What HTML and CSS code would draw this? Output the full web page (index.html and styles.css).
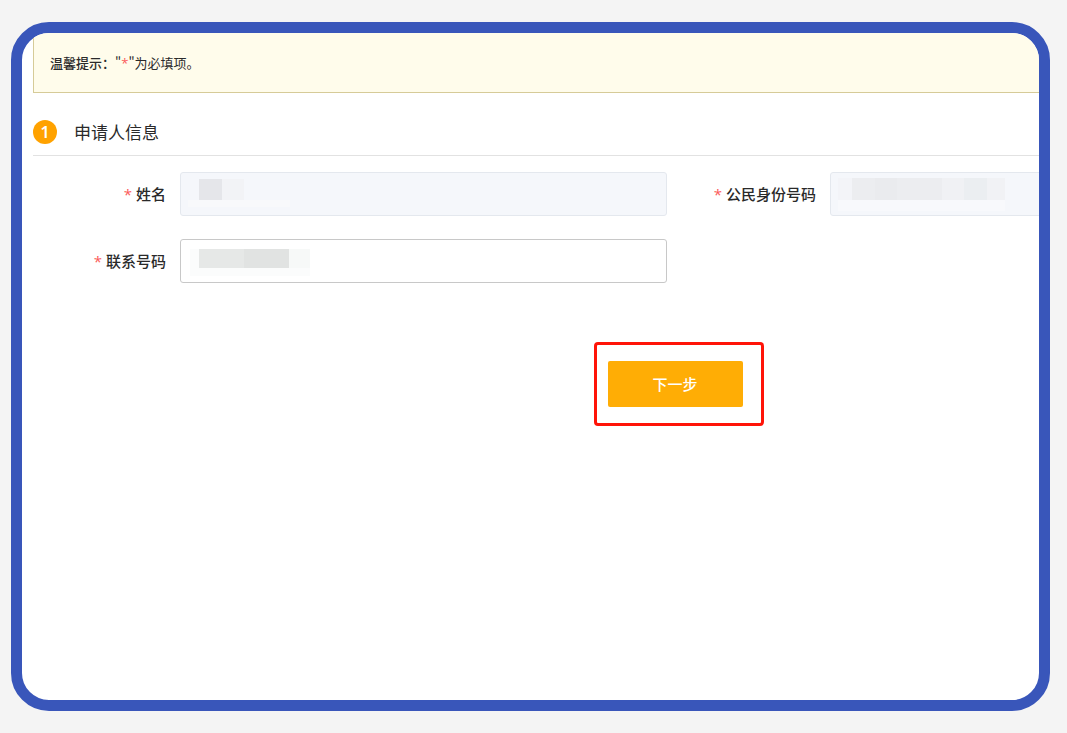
FILE: index.html
```
<!DOCTYPE html>
<html lang="zh-CN">
<head>
<meta charset="UTF-8">
<meta name="viewport" content="width=device-width,initial-scale=1">
<title>申请人信息</title>
<link rel="stylesheet" href="styles.css">
</head>

<body>
<main class="frame">

  <div class="notice">
    <strong>温馨提示：</strong><span>"<em>*</em>"为必填项。</span>
  </div>

  <form class="form">
    <h2 class="section-title"><span class="step">1</span>申请人信息</h2>

    <div class="fields">
      <div class="field">
        <label for="name"><em>*</em>姓名</label>
        <div class="control">
          <input type="text" id="name" disabled>
          <svg class="mask" width="112" height="44" aria-hidden="true">
            <rect x="19" y="7" width="23" height="21" fill="#e5e6ea"/>
            <rect x="42" y="7" width="22" height="21" fill="#f2f3f6"/>
            <rect x="8" y="28" width="102" height="7" fill="#f8f9fb"/>
          </svg>
        </div>
      </div>

      <div class="field">
        <label for="idNumber"><em>*</em>公民身份号码</label>
        <div class="control">
          <input type="text" id="idNumber" disabled>
          <svg class="mask" width="180" height="44" aria-hidden="true">
            <rect x="8" y="6" width="14" height="22" fill="#f3f4f8"/>
            <rect x="22" y="6" width="23" height="22" fill="#ecedf0"/>
            <rect x="45" y="6" width="22" height="22" fill="#eaebee"/>
            <rect x="67" y="6" width="45" height="22" fill="#ecedf0"/>
            <rect x="112" y="6" width="22" height="22" fill="#f0f1f4"/>
            <rect x="134" y="6" width="23" height="22" fill="#ebeef1"/>
            <rect x="157" y="6" width="18" height="22" fill="#f1f2f5"/>
            <rect x="8" y="28" width="167" height="11" fill="#f8f9fc"/>
          </svg>
        </div>
      </div>

      <div class="field">
        <label for="phone"><em>*</em>联系号码</label>
        <div class="control">
          <input type="text" id="phone">
          <svg class="mask" width="134" height="44" aria-hidden="true">
            <rect x="10" y="10" width="120" height="27" fill="#fbfcfc"/>
            <rect x="19" y="10" width="45" height="19" fill="#e6e8e7"/>
            <rect x="64" y="10" width="45" height="19" fill="#e1e3e2"/>
            <rect x="109" y="10" width="21" height="19" fill="#f7f9f8"/>
          </svg>
        </div>
      </div>
    </div>

    <div class="actions">
      <div class="highlight">
        <button type="button">下一步</button>
      </div>
    </div>
  </form>

</main>
</body>
</html>
```
FILE: styles.css
```
:root{
  --blue:#3956ba;
  --orange:#ffad05;
  --required:#fb5a5a;
}

*{box-sizing:border-box}
body{
  margin:0;min-height:100vh;padding:22px 17px 22px 11px;
  display:flex;background:#f4f4f4;color:#2a2a2a;
  font-family:"Noto Sans CJK SC",sans-serif;
}
em{font-family:"Open Sans",sans-serif;font-style:normal;color:var(--required)}

.frame{
  flex:1;min-width:0;padding-left:11px;overflow:hidden;
  background:#fff;border:11px solid var(--blue);border-radius:38px;
}

/* Notice bar */
.notice{
  height:60px;padding-left:16px;display:flex;align-items:center;
  background:#fffceb;border:1px solid #d6cb98;border-width:0 0 1px 1px;
  font-size:13px;line-height:20px;
}
.notice strong{font-weight:500}

/* The form runs on past the right edge of the frame */
.form{width:calc(100% + 278px)}
.section-title{
  display:flex;align-items:center;gap:17px;
  height:63px;margin:0 0 16px;padding-top:15px;
  border-bottom:1px solid #e2e2e2;
  font-size:17px;font-weight:400;line-height:24px;
}
.step{
  width:24px;height:24px;border-radius:50%;
  background:#ffa200;color:#fff;
  font-family:"Open Sans",sans-serif;font-size:17px;font-weight:600;text-align:center;
}

/* Fields */
.fields{display:grid;grid-template-columns:1fr 1fr;gap:23px 16px}
.field{display:flex;align-items:center}
.field label{
  width:147px;padding-right:14px;text-align:right;
  font-size:15px;font-weight:500;line-height:24px;
}
.field em{margin-right:4px;font-weight:400}
.control{position:relative;flex:1}
.control input{
  display:block;width:100%;height:44px;padding:0 18px;
  background:#fff;border:1px solid #c8c8c8;border-radius:3px;
  font:inherit;font-size:15px;
}
.control input:disabled{background:#f5f7fb;border-color:#e4e8ee}
.mask{position:absolute;top:0;left:0;pointer-events:none}

/* Next step */
.actions{display:flex;justify-content:center;margin-top:78px}
.highlight{position:relative}
.highlight::after{
  content:"";position:absolute;inset:-19px -21px -19px -14px;
  border:3px solid #ff1408;border-radius:4px;pointer-events:none;
}
.highlight button{
  display:block;width:135px;height:46px;padding:0 0 2px;
  background:var(--orange);border:none;border-radius:2px;color:#fff;
  font:inherit;font-size:15px;font-weight:500;cursor:pointer;
}
```
